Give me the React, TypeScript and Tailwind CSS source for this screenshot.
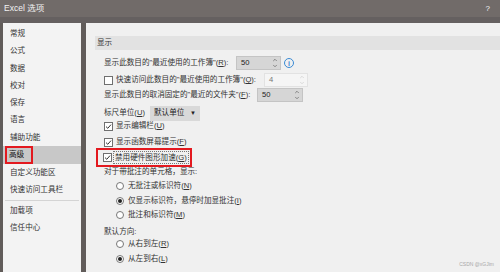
import { ChevronUp, ChevronDown } from "lucide-react";

const font = "font-['Liberation_Sans','Noto_Sans_CJK_SC',sans-serif]";

const sideItems = ["常规", "公式", "数据", "校对", "保存", "语言", "辅助功能"];

const Check = ({ checked = true }: { checked?: boolean }) => (
	<span className="w-[9px] h-[9px] border border-[#6f6f6f] bg-white flex items-center justify-center shrink-0">
		{checked && (
			<svg width="7" height="7" viewBox="0 0 7 7">
				<path d="M1 3.6 L2.8 5.3 L6 1.6" stroke="#333" strokeWidth="1" fill="none" />
			</svg>
		)}
	</span>
);

const Radio = ({ on = false }: { on?: boolean }) => (
	<span className="w-[8px] h-[8px] rounded-full border border-[#777] bg-white flex items-center justify-center shrink-0">
		{on && <span className="w-[4px] h-[4px] rounded-full bg-[#222]" />}
	</span>
);

const Spin = ({
	value,
	className,
	dim = false,
}: {
	value: string;
	className: string;
	dim?: boolean;
}) => (
	<div
		className={`h-[14px] shrink-0 flex items-center justify-between pl-[4px] pr-[2px] border ${className} ${
			dim ? "border-[#e2e2e2] text-[#777]" : "border-[#c4c4c4] text-[#222]"
		}`}
	>
		<span>{value}</span>
		<span className={`flex flex-col items-center leading-none ${dim ? "text-[#c8c8c8]" : "text-[#555]"}`}>
			<ChevronUp size={6} strokeWidth={2.5} />
			<ChevronDown size={6} strokeWidth={2.5} />
		</span>
	</div>
);

export default function App() {
	return (
		<div className={`w-[500px] h-[272px] overflow-hidden whitespace-nowrap bg-[#615c5a] text-[7.6px] text-[#333] ${font}`}>
			{/* title bar */}
			<div className="h-[17px] bg-[#716b69] flex items-center justify-between pl-[4px] pr-[10px] text-[#f2f2f2] text-[8.5px]">
				<span>Excel 选项</span>
				<span className="text-[8px]">?</span>
			</div>
			<div className="h-[6px] bg-[#656060]" />

			<div className="flex h-[249px] pl-[3px] gap-[5px]">
				{/* sidebar */}
				<div className="w-[78px] shrink-0 bg-[#f3f3f3] flex flex-col pt-[2px]">
					{sideItems.map((s) => (
						<div key={s} className="h-[17.3px] flex items-center pl-[7px]">
							{s}
						</div>
					))}
					<div className="h-[18px] bg-[#c8c8c8] flex items-center">
						<span className="ml-[2px] h-[18px] w-[28px] border-2 border-[#e3191f] flex items-center pl-[2px] text-[#111]">
							高级
						</span>
					</div>
					<div className="h-[17px] flex items-center pl-[7px]">自定义功能区</div>
					<div className="h-[17px] flex items-center pl-[7px]">快速访问工具栏</div>
					<div className="mx-[2px] h-px bg-[#d4d4d4] mt-[2px]" />
					<div className="h-[17px] flex items-center pl-[7px] mt-[1px]">加载项</div>
					<div className="h-[17px] flex items-center pl-[7px]">信任中心</div>
				</div>

				{/* content */}
				<div className="flex-1 bg-[#f0f0f0] flex flex-col relative">
					<div className="mt-[13px] ml-[9px] h-[14px] bg-[#e2e2e2] flex items-center pl-[2px]">显示</div>

					<div className="pl-[18px] flex flex-col">
						<div className="mt-[6px] h-[14px] flex items-center">
							<span className="w-[132px] shrink-0">显示此数目的"最近使用的工作簿"(<u>R</u>):</span>
							<Spin value="50" className="w-[45px] bg-[#d6d6d6]" />
							<span className="ml-[3px] w-[10px] h-[10px] rounded-full border border-[#3a8ad4] text-[#3a8ad4] text-[7px] font-bold flex items-center justify-center leading-none">
								i
							</span>
						</div>
						<div className="mt-[2px] h-[16px] flex items-center">
							<Check checked={false} />
							<span className="ml-[3px] w-[148px] shrink-0">快速访问此数目的"最近使用的工作簿"(<u>Q</u>):</span>
							<Spin value="4" className="w-[44px] bg-[#f5f5f5]" dim />
						</div>
						<div className="h-[14px] flex items-center">
							<span className="w-[153px] shrink-0">显示此数目的取消固定的"最近的文件夹"(<u>F</u>):</span>
							<Spin value="50" className="w-[46px] bg-[#d6d6d6]" />
						</div>
						<div className="mt-[3px] h-[16px] flex items-center">
							<span className="w-[46px] shrink-0">标尺单位(<u>U</u>)</span>
							<div className="w-[50px] h-[15px] bg-[#d9d9d9] flex items-center justify-between pl-[4px] pr-[4px] text-[#222]">
								<span>默认单位</span>
								<span className="text-[6px]">▼</span>
							</div>
						</div>
						<div className="h-[10px] flex items-center">
							<Check />
							<span className="ml-[3px]">显示编辑栏(<u>U</u>)</span>
						</div>
						<div className="mt-[5px] h-[12px] flex items-center">
							<Check />
							<span className="ml-[3px]">显示函数屏幕提示(<u>F</u>)</span>
						</div>
						<div className="-ml-[8px] h-[19px] w-[96px] border-2 border-[#e3191f] flex items-center pl-[5px]">
							<Check />
							<span className="ml-[1px] px-[1px] h-[13px] flex items-center border border-dotted border-[#777]">
								禁用硬件图形加速(<u>G</u>)
							</span>
						</div>
						<div className="h-[10px] flex items-center">对于带批注的单元格，显示:</div>
						<div className="pl-[12px] flex flex-col">
							<div className="mt-[2px] h-[14px] flex items-center gap-[4px]">
								<Radio />
								<span>无批注或标识符(<u>N</u>)</span>
							</div>
							<div className="mt-[1px] h-[14px] flex items-center gap-[4px]">
								<Radio on />
								<span>仅显示标识符，悬停时加显批注(<u>I</u>)</span>
							</div>
							<div className="h-[14px] flex items-center gap-[4px]">
								<Radio />
								<span>批注和标识符(<u>M</u>)</span>
							</div>
						</div>
						<div className="mt-[3px] h-[14px] flex items-center">默认方向:</div>
						<div className="pl-[12px] flex flex-col">
							<div className="h-[10px] flex items-center gap-[4px]">
								<Radio />
								<span>从右到左(<u>R</u>)</span>
							</div>
							<div className="mt-[3px] h-[14px] flex items-center gap-[4px]">
								<Radio on />
								<span>从左到右(<u>L</u>)</span>
							</div>
						</div>
					</div>

					<span className="absolute right-[6px] bottom-[4px] text-[5px] text-[#a8a8a8]">CSDN @xGJim</span>
				</div>
			</div>
		</div>
	);
}
